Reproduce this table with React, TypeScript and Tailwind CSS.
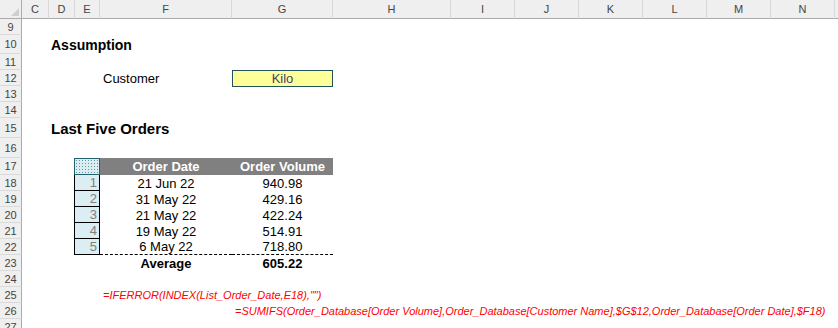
import React from "react";

const GRID =
  "grid grid-rows-[100%] grid-cols-[22px_27px_26px_25px_132px_101px_118px_64px_64px_64px_64px_64px_64px_1fr]";

function RowHead({ n }: { n: number }) {
  return (
    <div className="col-start-1 row-start-1 flex items-center justify-center bg-[#efefef] border-r border-b border-r-[#ababab] border-b-[#dadada] text-[11px] text-[#444] pt-px">
      {n}
    </div>
  );
}

function Row({
  n,
  h,
  children,
}: {
  n: number;
  h: string;
  children?: React.ReactNode;
}) {
  return (
    <div className={`${GRID} ${h}`}>
      <RowHead n={n} />
      {children}
    </div>
  );
}

const letters = ["C", "D", "E", "F", "G", "H", "I", "J", "K", "L", "M", "N"];

const data = [
  { i: 1, d: "21 Jun 22", v: "940.98" },
  { i: 2, d: "31 May 22", v: "429.16" },
  { i: 3, d: "21 May 22", v: "422.24" },
  { i: 4, d: "19 May 22", v: "514.91" },
  { i: 5, d: "6 May 22", v: "718.80" },
];

export default function App() {
  return (
    <div className="w-[838px] h-[328px] overflow-hidden bg-white font-['Liberation_Sans',Arial,sans-serif] text-black leading-none">
      {/* Column header */}
      <div className={`${GRID} h-[19px]`}>
        <div className="relative bg-[#efefef] border-r border-b border-[#ababab]">
          <svg
            className="absolute left-[11px] top-[8px]"
            width="9"
            height="9"
            viewBox="0 0 9 9"
          >
            <polygon points="8,0 8,8 0,8" fill="#cfcfcf" />
          </svg>
        </div>
        {letters.map((l) => (
          <div
            key={l}
            className="flex items-center justify-center bg-[#efefef] border-r border-b border-r-[#d8d8d8] border-b-[#ababab] text-[11px] text-[#444] pt-px"
          >
            {l}
          </div>
        ))}
        <div className="bg-[#efefef] border-b border-[#ababab]" />
      </div>

      <Row n={9} h="h-4" />
      <Row n={10} h="h-[19px]">
        <div className="col-start-3 col-span-4 flex items-center pl-[2px] text-[14px] font-bold whitespace-nowrap">
          Assumption
        </div>
      </Row>
      <Row n={11} h="h-4" />
      <Row n={12} h="h-4">
        <div className="col-start-5 flex items-center pl-[3px] text-[13px] whitespace-nowrap">
          Customer
        </div>
        <div className="col-start-6 flex items-center justify-center bg-[#ffff99] border border-[#22525a] text-[13px] text-[#3f3f76] h-[17px]">
          Kilo
        </div>
      </Row>
      <Row n={13} h="h-4" />
      <Row n={14} h="h-4" />
      <Row n={15} h="h-5">
        <div className="col-start-3 col-span-4 flex items-center pl-[2px] text-[15px] font-bold whitespace-nowrap">
          Last Five Orders
        </div>
      </Row>
      <Row n={16} h="h-5" />
      <Row n={17} h="h-[17px]">
        <div className="col-start-4 -ml-px border border-[#24606c] bg-[#dcedf2] bg-[radial-gradient(circle,#5e97a5_0.7px,transparent_0.9px)] bg-[length:3px_3px]" />
        <div className="col-start-5 flex items-center justify-center bg-[#808080] text-white font-bold text-[13px]">
          Order Date
        </div>
        <div className="col-start-6 flex items-center justify-center bg-[#808080] text-white font-bold text-[13px]">
          Order Volume
        </div>
      </Row>
      {data.map((r) => (
        <Row key={r.i} n={17 + r.i} h="h-4">
          <div className="col-start-4 -ml-px flex items-center justify-end pr-[2px] bg-[#daeef3] border border-t-0 border-black text-[13px] text-[#808080]">
            {r.i}
          </div>
          <div
            className={
              r.i === 5
                ? "col-start-5 flex items-center justify-center text-[13px] border-b border-dashed border-black"
                : "col-start-5 flex items-center justify-center text-[13px]"
            }
          >
            {r.d}
          </div>
          <div
            className={
              r.i === 5
                ? "col-start-6 flex items-center justify-center text-[13px] border-b border-dashed border-black"
                : "col-start-6 flex items-center justify-center text-[13px]"
            }
          >
            {r.v}
          </div>
        </Row>
      ))}
      <Row n={23} h="h-4">
        <div className="col-start-5 flex items-center justify-center text-[13px] font-bold">
          Average
        </div>
        <div className="col-start-6 flex items-center justify-center text-[13px] font-bold">
          605.22
        </div>
      </Row>
      <Row n={24} h="h-4" />
      <Row n={25} h="h-4">
        <div className="col-start-5 col-span-9 flex items-center pl-[3px] text-[11px] italic text-[#ff0000] whitespace-nowrap">
          =IFERROR(INDEX(List_Order_Date,E18),"")
        </div>
      </Row>
      <Row n={26} h="h-4">
        <div className="col-start-6 col-span-8 flex items-center pl-[3px] text-[11px] italic text-[#ff0000] whitespace-nowrap">
          =SUMIFS(Order_Database[Order Volume],Order_Database[Customer
          Name],$G$12,Order_Database[Order Date],$F18)
        </div>
      </Row>
      <Row n={27} h="h-4" />
    </div>
  );
}
